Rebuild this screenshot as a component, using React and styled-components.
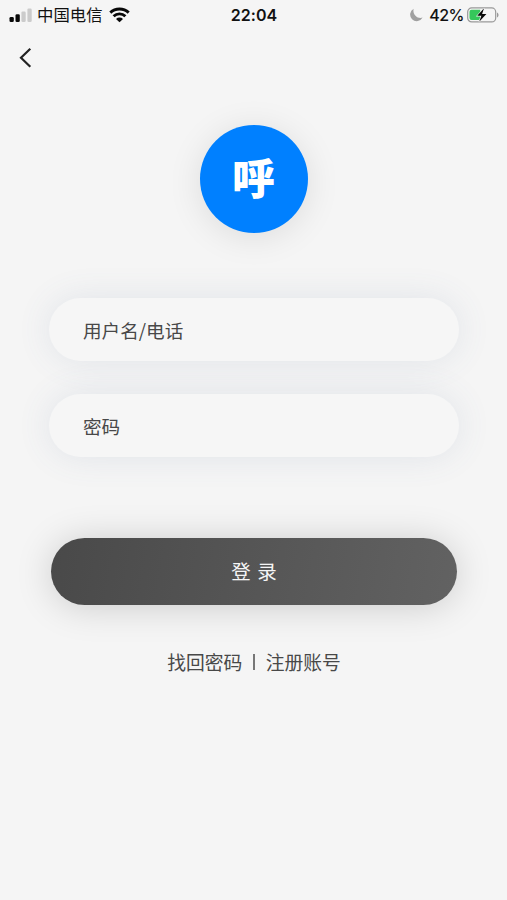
import React, { useState } from 'react';
import styled, { createGlobalStyle } from 'styled-components';

const GlobalStyle = createGlobalStyle`
  * {
    box-sizing: border-box;
  }
  body {
    margin: 0;
    background: #f5f5f5;
    font-family: 'Noto Sans CJK SC', sans-serif;
    color: #484848;
  }
`;
const Screen = styled.div`
  display: flex;
  flex-direction: column;
  width: 100%;
  height: 900px;
  overflow: hidden;
  background: #f5f5f5;
`;
const StatusBar = styled.header`
  display: grid;
  grid-template-columns: 1fr auto 1fr;
  align-items: center;
  height: 29px;
  padding: 0 8px 0 9px;
  color: #111;
  font-family: Inter, 'Noto Sans CJK SC', sans-serif;
  font-size: 16px;
  line-height: 29px;
`;
const StatusGroup = styled.div`
  display: flex;
  align-items: center;
  justify-content: ${props => props.$end ? 'flex-end' : 'flex-start'};
`;
const Signal = styled.svg`
  margin-right: 5px;
`;
const Carrier = styled.span`
  margin-right: 6px;
  padding-top: 1px;
  font-size: 16.4px;
`;
const Clock = styled.span`
  font-weight: 600;
  font-size: 16px;
  letter-spacing: 0.1px;
`;
const Battery = styled.span`
  margin: 0 3px 0 6px;
  font-size: 16px;
  font-weight: 500;
  letter-spacing: -0.5px;
`;
const NavBar = styled.nav`
  height: 57px;
  padding: 17px 18px;
`;
const BackButton = styled.button`
  display: block;
  padding: 0;
  border: 0;
  background: none;
  line-height: 0;
`;
const Logo = styled.div`
  display: flex;
  align-items: center;
  justify-content: center;
  width: 108px;
  height: 108px;
  margin: 39px auto 0;
  padding-bottom: 6px;
  border-radius: 50%;
  background: #0080ff;
  box-shadow: 0 4px 34px rgba(0, 0, 0, 0.1);
  color: #fff;
`;
const LogoText = styled.span`
  font-size: 43px;
  font-weight: 900;
  line-height: 44px;
`;
const Form = styled.form`
  display: flex;
  flex-direction: column;
  padding: 65px 48px 0 49px;
`;
const Fields = styled.div`
  display: flex;
  flex-direction: column;
  gap: 33px;
`;
const Field = styled.div`
  display: flex;
  height: 63px;
  padding: 0 34px;
  border-radius: 32px;
  background: #f6f6f6;
  box-shadow: 0 0 34px rgba(85, 105, 145, 0.12);
`;
const Input = styled.input`
  width: 100%;
  padding: 0 0 1px;
  border: 0;
  outline: 0;
  background: none;
  color: #484848;
  font-family: 'Noto Sans CJK SC', sans-serif;
  font-size: 18.6px;

  &::placeholder {
    color: #484848;
    opacity: 1;
  }
`;
const LoginButton = styled.button`
  height: 67px;
  margin: 81px 2px 0;
  padding: 0 0 2px;
  border: 0;
  border-radius: 34px;
  background: linear-gradient(100deg, #494949, #626262);
  box-shadow: 0 2px 36px rgba(0, 0, 0, 0.17);
  color: #f5f5f5;
  font-family: 'Noto Sans CJK SC', sans-serif;
  font-size: 19.5px;
  word-spacing: 2px;
`;
const Links = styled.div`
  display: flex;
  align-items: center;
  justify-content: center;
  gap: 11px;
  margin-top: 43px;
  font-size: 18.8px;
  line-height: 28px;
`;
const Link = styled.a`
  color: #484848;
  text-decoration: none;
`;
const Divider = styled.span`
  width: 1.5px;
  height: 16px;
  background: #777;
`;

const SignalIcon = () => (
  <Signal width="23" height="15" viewBox="0 0 23 15">
    <rect x="0.5" y="9" width="4.3" height="5" rx="1.3" fill="#080808" />
    <rect x="6.5" y="6.3" width="4.3" height="7.7" rx="1.3" fill="#080808" />
    <rect x="12.4" y="3.4" width="4.3" height="10.6" rx="1.3" fill="#cbcbcb" />
    <rect x="18.4" y="0.4" width="4.3" height="13.6" rx="1.3" fill="#cbcbcb" />
  </Signal>
);

const WifiIcon = () => (
  <svg width="21" height="16" viewBox="0 0 21 16" fill="none" stroke="#080808" strokeWidth="2.9">
    <path d="M1.3 5.6C6.4.7 14.6.7 19.7 5.6" />
    <path d="M4.6 9.3c3.3-3.2 8.5-3.2 11.8 0" />
    <path d="M7 11.9c2-1.8 5-1.8 7 0L10.5 15.2z" fill="#080808" stroke="none" />
  </svg>
);

const MoonIcon = () => (
  <svg width="14" height="14" viewBox="0 0 14 14">
    <path d="M4.7.7A6.6 6.6 0 1 0 13.6 9.6C8.4 11.4 3.1 6.2 4.7.7z" fill="#a0a0a0" />
  </svg>
);

const BatteryIcon = () => (
  <svg width="32" height="16" viewBox="0 0 32 16">
    <rect x="0.7" y="0.9" width="28" height="14" rx="4" fill="none" stroke="#999" strokeWidth="1.2" />
    <path d="M4.5 2.7h8.7v10.4H4.5a2 2 0 0 1-2-2V4.7a2 2 0 0 1 2-2z" fill="#35c75a" />
    <path d="M30 5.5c2 .7 2 4.3 0 5z" fill="#999" />
    <path d="M17 1.3 10.2 8.8h4.2l-2.2 5.9L19.4 7h-4.3z" fill="#080808" stroke="#f5f5f5" strokeWidth="1.2" paintOrder="stroke" />
  </svg>
);

const Login = () => {
  const [username, setUsername] = useState('');
  const [password, setPassword] = useState('');

  return (
    <Form onSubmit={e => e.preventDefault()}>
      <Fields>
        <Field>
          <Input
            placeholder="用户名/电话"
            value={username}
            onChange={e => setUsername(e.target.value)}
          />
        </Field>
        <Field>
          <Input
            type="password"
            placeholder="密码"
            value={password}
            onChange={e => setPassword(e.target.value)}
          />
        </Field>
      </Fields>
      <LoginButton>登 录</LoginButton>
      <Links>
        <Link href="#">找回密码</Link>
        <Divider />
        <Link href="#">注册账号</Link>
      </Links>
    </Form>
  );
};

const App = () => {
  return (
    <>
      <GlobalStyle />
      <Screen>
        <StatusBar>
          <StatusGroup>
            <SignalIcon />
            <Carrier>中国电信</Carrier>
            <WifiIcon />
          </StatusGroup>
          <Clock>22:04</Clock>
          <StatusGroup $end>
            <MoonIcon />
            <Battery>42%</Battery>
            <BatteryIcon />
          </StatusGroup>
        </StatusBar>
        <NavBar>
          <BackButton type="button">
            <svg width="16" height="24" viewBox="0 0 16 24" fill="none" stroke="#222" strokeWidth="2.2">
              <path d="M12.3 2.8 3 11.8l9.3 9" />
            </svg>
          </BackButton>
        </NavBar>
        <Logo>
          <LogoText>呼</LogoText>
        </Logo>
        <Login />
      </Screen>
    </>
  );
};

export default App;
